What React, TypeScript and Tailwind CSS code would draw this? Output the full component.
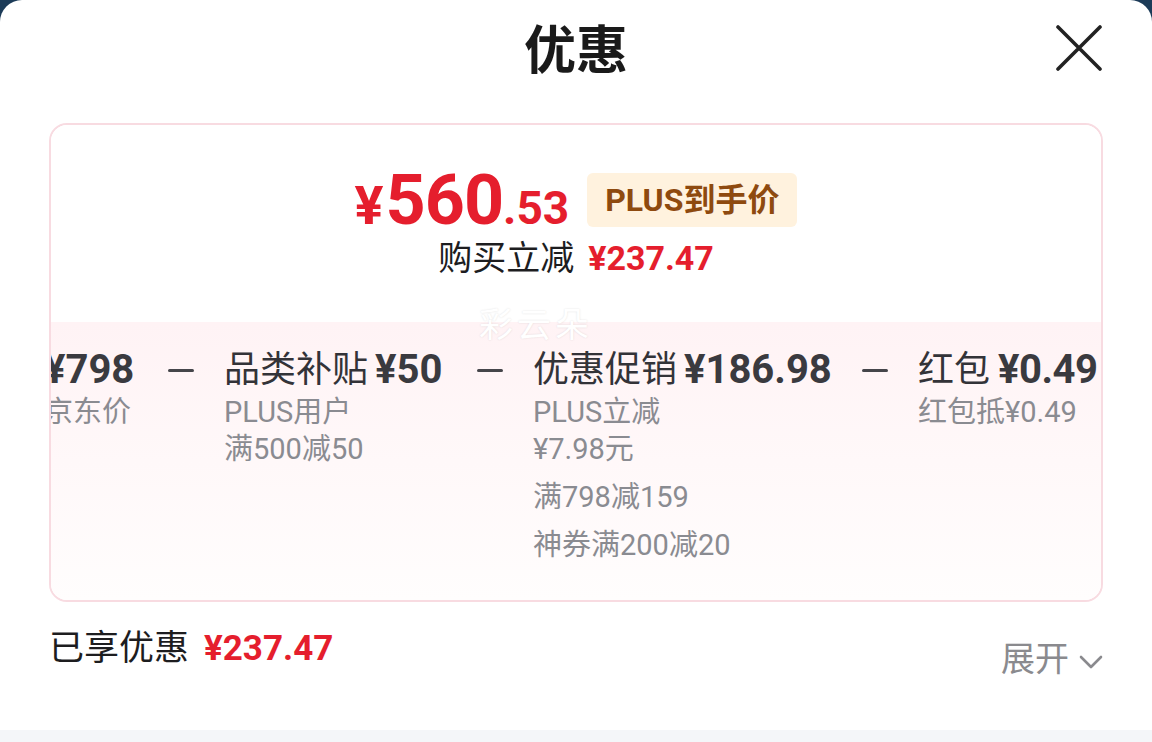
import React from "react";

const Dash = () => (
  <div className="shrink-0 w-[26px] h-[48px] flex items-center">
    <div className="w-[26px] h-[3px] bg-[#45454a] rounded-full" />
  </div>
);

export default function App() {
  return (
    <div className="w-[1152px] h-[742px] bg-[#1c3b58] overflow-hidden [font-family:Roboto,'Noto_Sans_CJK_SC',sans-serif]">
      <div className="w-full h-full bg-white rounded-t-[22px] flex flex-col">
        {/* Header */}
        <div className="relative h-[123px] flex items-start justify-center">
          <div className="mt-[17px] text-[52px] leading-[60px] font-bold text-[#1a1a1a] [font-family:'Noto_Sans_CJK_SC',sans-serif]">
            优惠
          </div>
          <button className="absolute right-[50px] top-[24px] w-[48px] h-[48px]">
            <svg viewBox="0 0 48 48" className="w-[48px] h-[48px]">
              <path d="M4 3 L46 45 M46 3 L4 45" stroke="#222" strokeWidth="3.6" strokeLinecap="round" />
            </svg>
          </button>
        </div>

        <div className="px-[49px]">
          {/* Card */}
          <div className="relative rounded-[18px] border-2 border-[#f8dbe1] overflow-hidden">
            {/* top */}
            <div className="bg-white pt-[45px] pb-[42px] flex flex-col items-center">
              <div className="h-[60px] flex items-center gap-[18px]">
                <div className="flex items-baseline text-[#e51e2d] font-bold">
                  <span className="text-[54px] leading-none mr-[2px]">¥</span>
                  <span className="text-[70px] leading-none tracking-[-1px]">560</span>
                  <span className="text-[46px] leading-none">.53</span>
                </div>
                <div className="h-[54px] px-[18px] rounded-[6px] bg-[#fff2de] flex items-center text-[32px] font-bold text-[#8e4a0f]">
                  PLUS到手价
                </div>
              </div>
              <div className="mt-[6px] h-[44px] flex items-center gap-[14px]">
                <span className="text-[34px] text-[#1d1d1f]">购买立减</span>
                <span className="text-[34px] font-bold text-[#e51e2d]">¥237.47</span>
              </div>
            </div>
            {/* bottom */}
            <div className="bg-gradient-to-b from-[#fff3f5] to-[#fffdfd] pt-[24px] pb-[36px] overflow-hidden">
              <div className="flex items-start gap-[30px] ml-[-7px] whitespace-nowrap">
                <div className="shrink-0 w-[94px] flex flex-col">
                  <div className="h-[48px] leading-[48px] text-[40px] font-bold text-[#3a3a3f]">¥798</div>
                  <div className="h-[37px] leading-[37px] text-[29px] text-[#8a8b91]">京东价</div>
                </div>
                <Dash />
                <div className="shrink-0 w-[223px] flex flex-col">
                  <div className="h-[48px] flex items-center gap-[7px]">
                    <span className="text-[36px] text-[#333338]">品类补贴</span>
                    <span className="text-[40px] font-bold text-[#3a3a3f]">¥50</span>
                  </div>
                  <div className="leading-[37px] text-[29px] text-[#8a8b91]">
                    <div>PLUS用户</div>
                    <div>满500减50</div>
                  </div>
                </div>
                <Dash />
                <div className="shrink-0 w-[299px] flex flex-col">
                  <div className="h-[48px] flex items-center gap-[7px]">
                    <span className="text-[36px] text-[#333338]">优惠促销</span>
                    <span className="text-[40px] font-bold text-[#3a3a3f]">¥186.98</span>
                  </div>
                  <div className="flex flex-col gap-[11px] text-[29px] leading-[37px] text-[#8a8b91]">
                    <div>
                      <div>PLUS立减</div>
                      <div>¥7.98元</div>
                    </div>
                    <div>满798减159</div>
                    <div>神券满200减20</div>
                  </div>
                </div>
                <Dash />
                <div className="shrink-0 flex flex-col">
                  <div className="h-[48px] flex items-center gap-[8px]">
                    <span className="text-[36px] text-[#333338]">红包</span>
                    <span className="text-[40px] font-bold text-[#3a3a3f] tracking-[-0.5px]">¥0.49</span>
                  </div>
                  <div className="leading-[37px] text-[29px] text-[#8a8b91]">红包抵¥0.49</div>
                </div>
              </div>
            </div>
            {/* watermark */}
            <div className="absolute left-[428px] top-[178px] text-[34px] leading-[40px] text-white tracking-[4px] [text-shadow:0_0_2px_rgba(0,0,0,0.12)] [font-family:'Noto_Sans_CJK_SC',sans-serif]">
              彩云朵
            </div>
          </div>

          {/* Footer row */}
          <div className="flex justify-between items-start h-[128px]">
            <div className="mt-[25px] h-[44px] flex items-center gap-[15px]">
              <span className="text-[35px] text-[#1d1d1f]">已享优惠</span>
              <span className="text-[35px] font-bold text-[#e51e2d]">¥237.47</span>
            </div>
            <div className="mt-[35px] h-[44px] flex items-center gap-[10px] text-[#8a8a8e]">
              <span className="text-[34px]">展开</span>
              <svg viewBox="0 0 24 16" className="w-[24px] h-[16px] mt-[6px]">
                <path d="M2 3 L12 13 L22 3" fill="none" stroke="#8a8a8e" strokeWidth="2.6" strokeLinecap="round" strokeLinejoin="round" />
              </svg>
            </div>
          </div>
        </div>
        <div className="flex-1 bg-[#f4f6f9]" />
      </div>
    </div>
  );
}
